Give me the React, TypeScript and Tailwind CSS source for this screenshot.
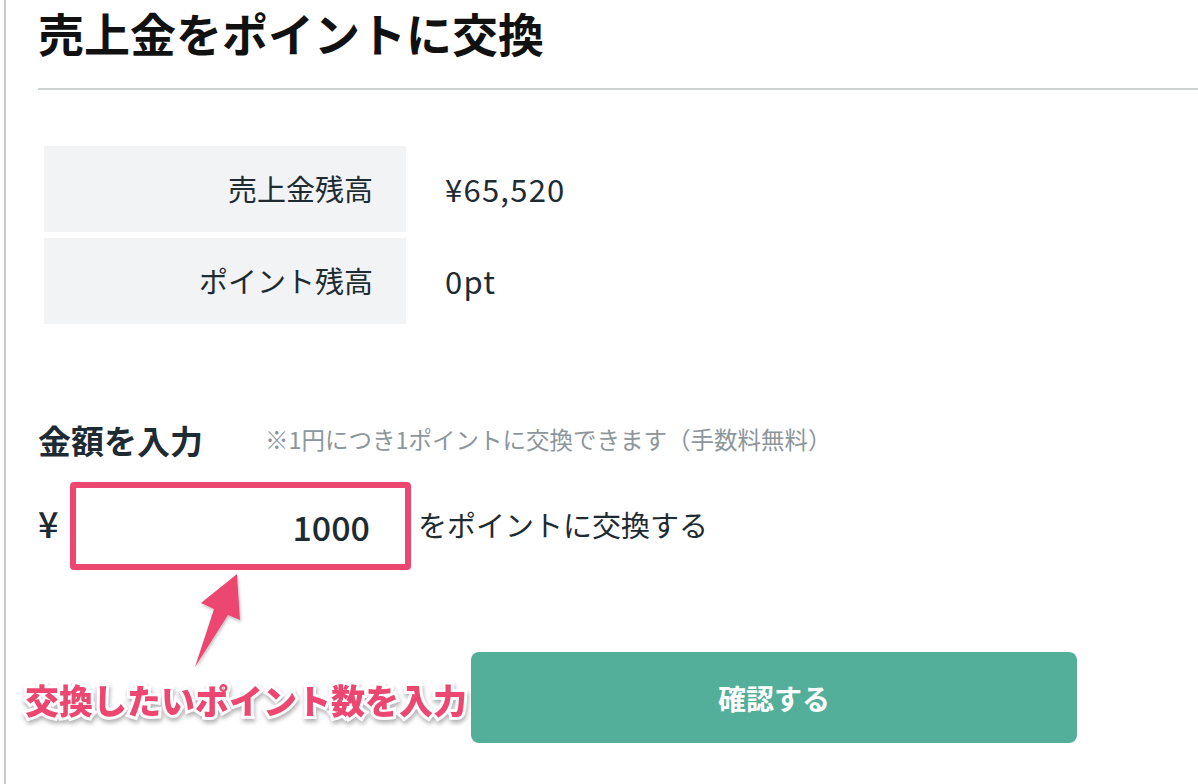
import React from "react";

const FONT = { fontFamily: '"Noto Sans CJK JP", "Noto Sans", sans-serif' };

const BALANCES = [
  { label: "売上金残高", value: "¥65,520" },
  { label: "ポイント残高", value: "0pt" },
];

const Arrow = () => (
  <svg
    className="absolute left-0 top-0 pointer-events-none"
    width="1198"
    height="784"
    viewBox="0 0 1198 784"
  >
    <defs>
      <filter id="arrowShadow" x="-20%" y="-20%" width="140%" height="140%">
        <feDropShadow dx="1" dy="2" stdDeviation="1.5" floodColor="#000" floodOpacity="0.25" />
      </filter>
    </defs>
    <polygon
      points="237,574 240,620 228,615 195,667 214,609 201,603"
      fill="#ec4771"
      filter="url(#arrowShadow)"
    />
  </svg>
);

export default function App() {
  return (
    <div className="relative w-[1198px] h-[784px] overflow-hidden bg-white pl-[4px]" style={FONT}>
      <div className="h-full border-l-2 border-[#c9c9c9] pl-[32px] text-[#1e2b33]">
        {/* header */}
        <div className="h-[90px] border-b-2 border-[#cfd3d4]">
          <h1 className="text-[46px] leading-[64px] font-bold text-[#111]">
            売上金をポイントに交換
          </h1>
        </div>

        {/* balances */}
        <div className="mt-[56px] ml-[6px] flex flex-col gap-[6px]">
          {BALANCES.map((row) => (
            <div key={row.label} className="flex items-center h-[86px]">
              <div className="w-[362px] h-full bg-[#f2f3f4] flex items-center justify-end pr-[33px] text-[29px]">
                {row.label}
              </div>
              <div className="ml-[39px] text-[31px] tracking-[0.04em]">{row.value}</div>
            </div>
          ))}
        </div>

        {/* amount input */}
        <div className="mt-[86px] h-[60px] flex items-center">
          <span className="w-[227px] text-[33px] font-bold leading-none">金額を入力</span>
          <span className="text-[23.5px] text-[#8c969b] leading-none">
            ※1円につき1ポイントに交換できます（手数料無料）
          </span>
        </div>

        <div className="mt-[12px] flex items-center">
          <span className="w-[32px] text-[36px] font-medium leading-none -mt-[8px]">¥</span>
          <div className="w-[341px] h-[88px] border-[6px] border-[#ec4771] rounded-[4px] flex items-center justify-end pr-[35px]">
            <span className="text-[34px] font-medium">1000</span>
          </div>
          <span className="ml-[7px] text-[29px] leading-none -mt-[4px]">をポイントに交換する</span>
        </div>

        {/* confirm */}
        <div className="mt-[82px] ml-[433px]">
          <button className="w-[606px] h-[91px] rounded-[8px] bg-[#54af9a] text-white text-[28px] font-bold">
            確認する
          </button>
        </div>
      </div>

      {/* annotation overlay */}
      <Arrow />
      <div
        className="absolute left-[25px] top-[676px] text-[34px] leading-[48px] font-black text-[#ec4771] [-webkit-text-stroke:6px_#ffffff] [paint-order:stroke_fill] [filter:drop-shadow(1px_3px_2px_rgba(0,0,0,0.3))]"
      >
        交換したいポイント数を入力
      </div>
    </div>
  );
}
